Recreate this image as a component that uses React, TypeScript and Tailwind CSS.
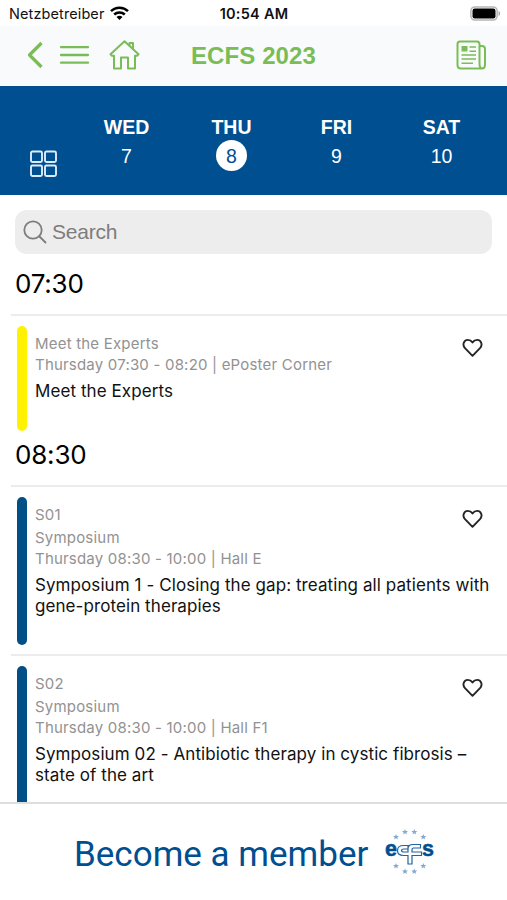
import React, { useState } from 'react';

type Session = {
  code?: string;
  kind: string;
  info: string;
  title: string[];
  bar: string;
  height: string;
};

const days = [
  { name: 'WED', date: 7 },
  { name: 'THU', date: 8 },
  { name: 'FRI', date: 9 },
  { name: 'SAT', date: 10 },
];

const slots: { time: string; sessions: Session[] }[] = [
  {
    time: '07:30',
    sessions: [
      {
        kind: 'Meet the Experts',
        info: 'Thursday 07:30 - 08:20 | ePoster Corner',
        title: ['Meet the Experts'],
        bar: 'bg-[#fff200]',
        height: 'h-[126px]',
      },
    ],
  },
  {
    time: '08:30',
    sessions: [
      {
        code: 'S01',
        kind: 'Symposium',
        info: 'Thursday 08:30 - 10:00 | Hall E',
        title: ['Symposium 1 - Closing the gap: treating all patients with', 'gene-protein therapies'],
        bar: 'bg-[#004f86]',
        height: 'h-[169px]',
      },
      {
        code: 'S02',
        kind: 'Symposium',
        info: 'Thursday 08:30 - 10:00 | Hall F1',
        title: ['Symposium 02 - Antibiotic therapy in cystic fibrosis –', 'state of the art'],
        bar: 'bg-[#004f86]',
        height: 'h-[169px]',
      },
    ],
  },
];

function StatusBar() {
  return (
    <div className="grid h-[26px] shrink-0 grid-cols-3 items-center bg-white pt-px pr-[6px] pl-[9px] font-['Inter',sans-serif] text-[14.5px] text-[#111]">
      <div className="flex items-center gap-[6px]">
        <span className="tracking-[0.1px]">Netzbetreiber</span>
        <svg className="mb-[2px]" width="19" height="14" viewBox="0 0 19 14" fill="none" stroke="#000" strokeWidth="2.5">
          <path d="M1 5.2C5.7 .6 13.3 .6 18 5.2" />
          <path d="M4.2 8.5c3-2.8 7.6-2.8 10.6 0" />
          <path d="M6.5 11 9.5 14l3-3c-1.7-1.6-4.3-1.6-6 0z" fill="#000" stroke="none" />
        </svg>
      </div>
      <span className="-ml-[2px] text-center font-semibold tracking-[0.25px]">10:54 AM</span>
      <svg className="mb-px justify-self-end" width="31" height="15" viewBox="0 0 31 15">
        <rect x=".9" y=".9" width="26.2" height="13.2" rx="4" fill="#fff" stroke="#b5b5b5" strokeWidth="1.5" />
        <rect x="2.5" y="2.5" width="23" height="10" rx="2.3" fill="#000" />
        <path d="M28.5 5c2.2.8 2.2 4.2 0 5z" fill="#aaa" />
      </svg>
    </div>
  );
}

function Header() {
  return (
    <header className="flex h-[60px] shrink-0 items-center bg-[#f8fafc] pr-[20px] pb-[2px] pl-[26px] text-[#7abd57]">
      <div className="flex w-[165px] items-center">
        <svg width="17" height="28" viewBox="0 0 17 28" fill="none" stroke="currentColor" strokeWidth="3.3">
          <path d="M15.5 2 3.5 14l12 12" strokeLinejoin="round" />
        </svg>
        <svg className="ml-[16px]" width="31" height="20" viewBox="0 0 31 20" stroke="currentColor" strokeWidth="2.3" strokeLinecap="round">
          <path d="M2 2.2h27M2 10h27M2 17.7h27" />
        </svg>
        <svg className="ml-[19px]" width="31" height="30" viewBox="0 0 31 30" fill="none" stroke="currentColor" strokeWidth="2" strokeLinejoin="round" strokeLinecap="round">
          <path d="M1.5 14.2 15.5 1.3 29.5 14.2 28 15.8H26V28.5H19V17.5H12V28.5H5V15.8H3z" />
          <path d="M20.5 5.500V3H24V9" />
        </svg>
      </div>
      <h1 className="pt-[2px] font-['Liberation_Sans',sans-serif] text-[24px] font-bold tracking-[0.1px]">ECFS 2023</h1>
      <svg className="ml-auto" width="31" height="30" viewBox="0 0 31 30" fill="none" stroke="currentColor" strokeWidth="2">
        <path d="M23.5 6h2.5q3 0 3 3v15.5q0 4-3 4H5q-3.5 0-3.5-3.5V4q0-2.5 2.5-2.5h17q2.5 0 2.5 2.5v20q0 4.5 3 4.5" />
        <rect x="5.5" y="6" width="6" height="5.5" fill="currentColor" stroke="none" />
        <path d="M13.5 7H20M13.5 11.2H20M5.5 15H20M5.5 19H20M5.5 23.2H17" strokeWidth="1.6" />
      </svg>
    </header>
  );
}

function DayPicker() {
  const [active, setActive] = useState(8);

  return (
    <nav className="flex h-[109px] shrink-0 bg-[#004f91] font-['Liberation_Sans',sans-serif] text-white">
      <div className="flex w-[74px] items-end pb-[17px] pl-[30px]">
        <svg width="27" height="28" viewBox="0 0 27 28" fill="none" stroke="#dcecff" strokeWidth="1.9">
          <rect x="1" y="1.5" width="11" height="10.5" rx="1.5" />
          <rect x="15" y="1.5" width="11" height="10.5" rx="1.5" />
          <rect x="1" y="15.5" width="11" height="10.5" rx="1.5" />
          <rect x="15" y="15.5" width="11" height="10.5" rx="1.5" />
        </svg>
      </div>
      {days.map((day) => (
        <button
          key={day.date}
          onClick={() => setActive(day.date)}
          className="flex w-[105px] flex-col items-center pt-[28px]"
        >
          <span className="text-[19.5px] leading-[26px] font-bold">{day.name}</span>
          <span
            className={`flex size-[31px] items-center justify-center rounded-full pt-[2px] text-[19.5px] leading-none ${
              day.date === active ? 'bg-white text-[#004f91]' : ''
            }`}
          >
            {day.date}
          </span>
        </button>
      ))}
    </nav>
  );
}

function SessionRow({ session }: { session: Session }) {
  return (
    <article className={`ml-[11px] flex shrink-0 border-t-2 border-[#ececec] pl-[6px] ${session.height}`}>
      <div className={`mt-[10px] mb-[9px] w-[10px] shrink-0 rounded-full ${session.bar}`} />
      <div className="ml-[8px] flex-1 pt-[17px] whitespace-nowrap">
        <div className="text-[15px] leading-[21px] tracking-[0.2px] text-[#929292]">
          {session.code && <p className="mb-[2px]">{session.code}</p>}
          <p>{session.kind}</p>
          <p>{session.info}</p>
        </div>
        <h3 className="mt-[6px] text-[17px] leading-[21px] tracking-[0.08px] text-[#111]">
          {session.title.map((line) => (
            <span key={line} className="block">{line}</span>
          ))}
        </h3>
      </div>
      <button className="mt-[22px] mr-[24px] -ml-[45px] h-[19px] w-[21px]">
        <svg width="21" height="19" viewBox="0 0 21 19" fill="none" stroke="#252525" strokeWidth="1.9" strokeLinejoin="round">
          <path d="M10.5 17.800 3 10.200C-.4 6.300 2.500 1.900 5.700 1.900c2.400 0 3.800 1.100 4.800 2.500 1-1.400 2.400-2.500 4.800-2.500 3.200 0 6.100 4.400 2.700 8.300z" />
        </svg>
      </button>
    </article>
  );
}

const stars = [
  [21, 4], [30.3, 4], [12, 9], [39.3, 9], [12, 38], [39.3, 38], [21, 43.5], [30.3, 43.5],
];

function EcfsLogo() {
  return (
    <svg width="54" height="48" viewBox="0 0 54 48" fontFamily="Liberation Sans, sans-serif" fontWeight="bold">
      {stars.map(([x, y]) => (
        <path
          key={`${x}-${y}`}
          transform={`translate(${x} ${y})`}
          d="M0-3 .8-1 3-.9 1.3.4 1.9 2.5 0 1.3-1.9 2.5-1.3.4-3-.9-.8-1z"
          fill="#83a9d3"
        />
      ))}
      <text x="1" y="28" fontSize="21.5" fill="#004f91" stroke="#004f91" strokeWidth=".5">e</text>
      <text x="38" y="28" fontSize="21.5" fill="#004f91" stroke="#004f91" strokeWidth=".5">s</text>
      {/* linked cross between the two letters */}
      <path
        d="M24 17.5H19.5q-6 0-6 5t6 5H24v8.500h4v-8.500h9.500v-3.500H28V21.500q0-1.500 1.500-1.500h7V16.500H29q-5 0-5 4.500v3h-4q-2.500 0-2.500-1.500t2.500-1.500h4z"
        fill="#fff"
        stroke="#1f65a3"
        strokeWidth="1.2"
      />
    </svg>
  );
}

export default function App() {
  return (
    <div className="flex h-[900px] w-[507px] flex-col overflow-hidden bg-white font-['Inter',sans-serif]">
      <StatusBar />
      <Header />
      <DayPicker />

      <main className="flex min-h-0 flex-1 flex-col overflow-hidden">
        <div className="m-[15px] flex h-[44px] shrink-0 items-center gap-[5px] rounded-[12px] bg-[#ededed] pl-[8px] text-[#7d7d7d]">
          <svg width="24" height="24" viewBox="0 0 24 24" fill="none" stroke="currentColor" strokeWidth="1.8" strokeLinecap="round">
            <circle cx="10" cy="10" r="8.7" />
            <path d="m16.5 16.5 6 6" />
          </svg>
          <span className="font-['Liberation_Sans',sans-serif] text-[21px] tracking-[-0.2px]">Search</span>
        </div>

        {slots.map((slot) => (
          <React.Fragment key={slot.time}>
            <h2 className="h-[45px] shrink-0 pl-[15px] text-[26px] leading-[30px] tracking-[-0.2px] text-black">{slot.time}</h2>
            {slot.sessions.map((session) => (
              <SessionRow key={session.code ?? session.kind} session={session} />
            ))}
          </React.Fragment>
        ))}
      </main>

      <footer className="flex h-[98px] shrink-0 items-center border-t-2 border-[#dedede] pl-[74px]">
        <span className="w-[310px] pt-[6px] font-['Roboto',sans-serif] text-[35px] whitespace-nowrap text-[#004f91]">Become a member</span>
        <EcfsLogo />
      </footer>
    </div>
  );
}
